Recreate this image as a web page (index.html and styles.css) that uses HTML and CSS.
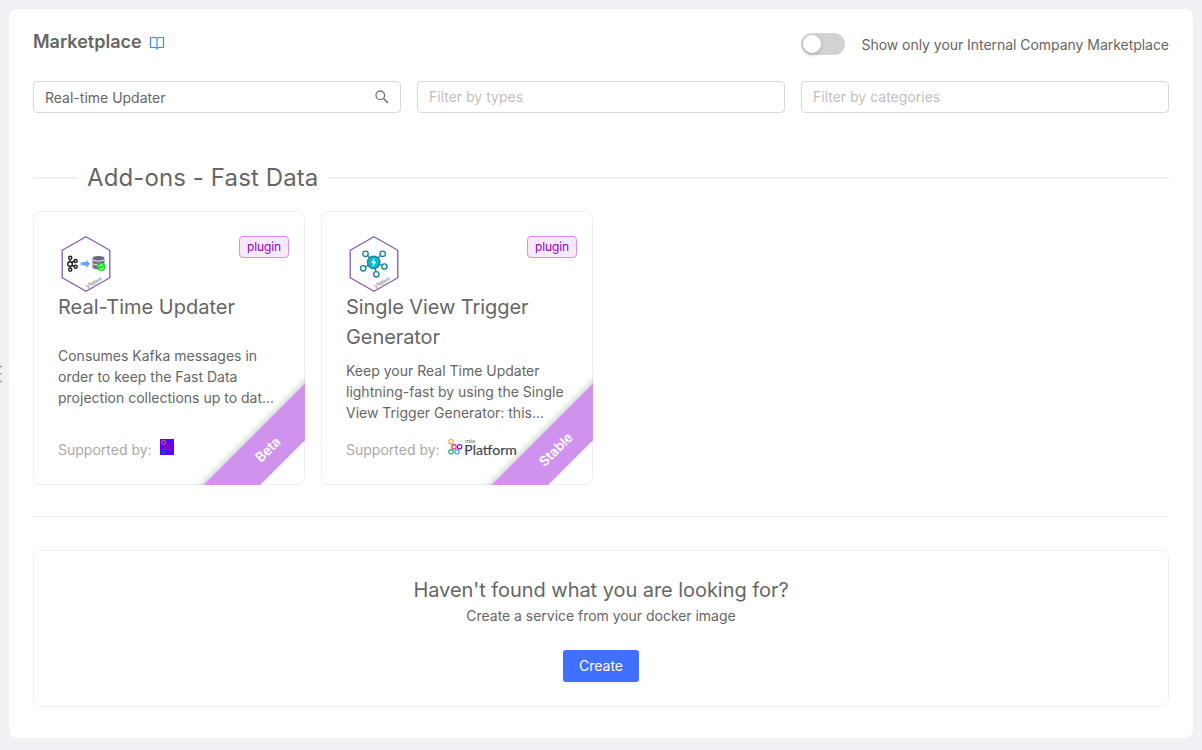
FILE: index.html
```html
<!DOCTYPE html>
<html lang="en">
<head>
<meta charset="utf-8">
<title>Marketplace</title>
<link rel="stylesheet" href="styles.css">
</head>
<body>
<svg class="edge-handle" width="3" height="18" viewBox="0 0 3 18"><path d="M0 1.5h2M0 9h1.5M0 16.500h2" stroke="#999" stroke-width="1.500"/></svg>
<main class="panel">
  <header class="header">
    <h1 class="title">Marketplace
      <svg class="book" width="16" height="14" viewBox="0 0 16 14" fill="none"><path d="M1.500 1.500H6.500Q8 1.500 8 3V13.500M8 3Q8 1.500 9.500 1.500H14.500V11.500H9.500L8 12.500L6.500 11.500H1.500V1.500" stroke="#3f87ff" stroke-width="1.200"/></svg>
    </h1>
    <div class="toggle"><span class="switch"><span class="knob"></span></span><span class="toggle-label">Show only your Internal Company Marketplace</span></div>
  </header>
  <div class="filters">
    <div class="field search"><span>Real-time Updater</span>
      <svg width="14" height="14" viewBox="0 0 14 14" fill="none" stroke="#777" stroke-width="1.300"><circle cx="5.300" cy="5.300" r="4.300"/><path d="M8.500 8.500L13 12.800" stroke-width="1.600"/></svg>
    </div>
    <div class="field placeholder">Filter by types</div>
    <div class="field placeholder">Filter by categories</div>
  </div>
  <h2 class="divider">Add-ons - Fast Data</h2>
  <section class="cards">
    <article class="card">
      <div class="card-top">
        <svg width="56" height="56" viewBox="0 0 56 56" fill="none">
          <path d="M28 .800L51.800 14.300V41.700L28 55.200L4.200 41.700V14.300Z" stroke="#8659a8" stroke-width="1.300"/>
          <g stroke="#222" stroke-width="1.400"><path d="M12 23v9.500M13.500 26.500l3-1.500M13.500 29l3 1.500"/><circle cx="12" cy="28" r="2.300" fill="#fff"/><circle cx="12.200" cy="21.800" r="1.600" fill="#fff"/><circle cx="12.200" cy="33.600" r="1.600" fill="#fff"/><circle cx="17.700" cy="25" r="1.500" fill="#fff"/><circle cx="17.700" cy="30.700" r="1.500" fill="#fff"/></g>
          <path d="M22.500 26h1v3.500h-1zM24.200 26h4v-2.300L32 27.800L28.200 32v-2.500h-4z" fill="#5fa4fb"/>
          <path d="M34.500 22.500v9.500q6 3 12 0v-9.500z" fill="#77758a"/><ellipse cx="40.500" cy="22" rx="6" ry="2" fill="#696680"/><path d="M34.500 24q6 2.500 12 0M34.500 28q6 2.500 12 0" stroke="#e4e4ec"/>
          <circle cx="43.500" cy="31" r="4" fill="#0be51b"/><path d="M41.300 31a2.200 2.200 0 0 1 4-1.200M45.700 31a2.200 2.200 0 0 1-4 1.200" stroke="#fff" stroke-width=".900"/>
          <g transform="translate(31 50) rotate(-29)"><circle cx="-2" cy="-1" r="1" fill="#ff8ca0"/><circle cx="-1" cy="1" r="1" fill="#a2a0ff"/><text class="badge-text" x="0" y="1" textLength="15" lengthAdjust="spacingAndGlyphs">Platform</text></g>
        </svg>
        <span class="tag">plugin</span>
      </div>
      <h3 class="card-title">Real-Time Updater</h3>
      <div class="desc"><p>Consumes Kafka messages in<br>order to keep the Fast Data<br>projection collections up to dat...</p></div>
      <div class="support"><span>Supported by:</span>
        <svg width="14" height="16" viewBox="0 0 14 16" fill="none"><path fill="#5b00ff" d="M0 0h14v16H0z"/><circle cx="3.700" cy="3.300" r="2" stroke="#d6705c"/><path d="M4.500 5.500L6 8M4.500 10.500L6 8.500" stroke="#e3004b"/><circle cx="6.800" cy="8" r="1.600" stroke="#e3004b"/><circle cx="3.700" cy="12.300" r="2" stroke="#077ba0"/><path d="M8.500 10.500l2 1" stroke="#356bff"/></svg>
      </div>
      <div class="ribbon-clip"><span class="ribbon">Beta</span></div>
    </article>
    <article class="card">
      <div class="card-top">
        <svg width="56" height="56" viewBox="0 0 56 56" fill="none">
          <path d="M28 .800L51.800 14.300V41.700L28 55.200L4.200 41.700V14.300Z" stroke="#8659a8" stroke-width="1.300"/>
          <g stroke="#187f9b" stroke-width="1.300"><path d="M28 26L19.500 17.500M28 26L36.500 17.500M28 26L17 32.300M28 26L38.500 30.500M28 26L30.300 38"/><circle cx="19.500" cy="17.800" r="2.700" fill="#fff"/><circle cx="36.700" cy="17.800" r="2.700" fill="#fff"/><circle cx="17.200" cy="32.300" r="2.700" fill="#fff"/><circle cx="38.400" cy="30.500" r="2.700" fill="#fff"/><circle cx="30.300" cy="38.300" r="2.700" fill="#fff"/><circle cx="27.700" cy="26.400" r="6.200" fill="#05bfd3"/></g>
          <path d="M28.500 22L25 27h2.300l-.8 4 3.700-5.300h-2.300z" fill="#fff"/>
          <g transform="translate(31 50) rotate(-29)"><circle cx="-2" cy="-1" r="1" fill="#ffb19a"/><circle cx="-1" cy="1" r="1" fill="#b4a0e8"/><text class="badge-text" x="0" y="1" textLength="15" lengthAdjust="spacingAndGlyphs">Platform</text></g>
        </svg>
        <span class="tag">plugin</span>
      </div>
      <h3 class="card-title long">Single View Trigger Generator</h3>
      <div class="desc"><p>Keep your Real Time Updater<br>lightning-fast by using the Single<br>View Trigger Generator: this...</p></div>
      <div class="support"><span>Supported by:</span>
        <svg class="brand" width="70" height="18" viewBox="0 0 70 18" fill="none"><g stroke-width="1.100"><circle cx="3" cy="2.700" r="2.200" stroke="#ff9d25"/><circle cx="6" cy="7.800" r="2.200" stroke="#f12b4b"/><circle cx="11.700" cy="7.700" r="2.200" stroke="#8000d5"/><circle cx="3" cy="12.800" r="2.200" stroke="#12a66a"/><circle cx="9" cy="12.800" r="2.200" stroke="#3989ff"/></g><text class="mia" x="17" y="4.300" textLength="10" lengthAdjust="spacingAndGlyphs">mia</text><text class="platform" x="16.300" y="16" textLength="52.500" lengthAdjust="spacingAndGlyphs">Platform</text></svg>
      </div>
      <div class="ribbon-clip"><span class="ribbon">Stable</span></div>
    </article>
  </section>
  <hr class="rule">
  <section class="empty">
    <h3 class="empty-title">Haven't found what you are looking for?</h3>
    <p class="empty-text">Create a service from your docker image</p>
    <button class="create">Create</button>
  </section>
</main>
</body>
</html>
```
FILE: styles.css
```css
* { box-sizing: border-box; }
body { margin: 0; height: 750px; padding: 9px 9px 12px; background: #f0f1f5; font: 14px/21px Inter, sans-serif; color: #666; overflow: hidden; }
h1, h2, h3, p { margin: 0; font-weight: 400; }
svg { display: block; flex: none; }
.edge-handle { position: absolute; left: 0; top: 365px; }
.panel { height: 729px; padding: 20px 24px; background: #fff; border-radius: 8px; }
.header { display: flex; justify-content: space-between; height: 52px; }
.title { display: flex; align-items: center; gap: 7px; height: 25px; font-size: 18px; font-weight: 600; }
.book { margin-top: 2px; }
.toggle { display: flex; align-items: center; gap: 17px; height: 31px; }
.toggle-label { letter-spacing: -.04px; }
.switch { width: 44px; height: 22px; margin-top: -1px; padding: 2px; border-radius: 11px; background: #d2d2d2; }
.knob { display: block; width: 18px; height: 18px; border-radius: 50%; background: #fff; box-shadow: 0 2px 4px rgba(0, 35, 11, .2); }
.filters { display: grid; grid-template-columns: repeat(3, 1fr); gap: 16px; }
.field { height: 32px; padding: 0 11px; border: 1px solid #d9d9d9; border-radius: 4px; line-height: 30px; }
.search { display: flex; justify-content: space-between; align-items: center; padding-top: 1px; }
.search svg { margin-top: -2px; }
.placeholder { color: #bfbfbf; }
.divider { display: flex; align-items: center; gap: 10px; margin-top: 47px; font-size: 24px; line-height: 36px; letter-spacing: .11px; white-space: nowrap; }
.divider::before, .divider::after { content: ""; height: 2px; background: #f0f0f0; }
.divider::before { width: 44px; }
.divider::after { flex: 1; }
.cards { display: flex; gap: 16px; margin-top: 15px; }
.card { position: relative; display: flex; flex-direction: column; width: 272px; height: 274px; padding: 24px; border: 1px solid #f0f0f0; border-radius: 8px; }
.card-top { display: flex; justify-content: space-between; align-items: flex-start; margin-right: -9px; }
.tag { width: 50px; height: 22px; border: 1px solid #d98cf5; border-radius: 4px; background: #f9e8ff; color: #8e00c4; font-size: 12px; line-height: 20px; letter-spacing: -.08px; text-align: center; }
.card-title { font-size: 20px; line-height: 30px; }
.long { letter-spacing: -.08px; }
.desc { display: flex; align-items: center; flex: 1; white-space: nowrap; }
.support { display: flex; align-items: flex-start; gap: 8px; height: 29px; padding-top: 8px; color: #aaa; }
.brand { overflow: visible; }
.ribbon-clip { position: absolute; inset: -1px; overflow: hidden; border-radius: 8px 8px 0 8px; pointer-events: none; }
.ribbon { position: absolute; left: 134px; top: 219px; width: 200px; height: 40px; padding-left: 2px; background: #cf93ef; color: #fff; font-size: 13.500px; font-weight: 600; line-height: 40px; letter-spacing: -.1px; text-align: center; transform: rotate(-45deg); box-shadow: 0 0 8px rgba(0, 0, 0, .3); clip-path: inset(-12px 0 0 0); }
.badge-text { font: italic 5px Inter, sans-serif; fill: #555; }
.mia { font: 6px Lato, sans-serif; fill: #555; }
.platform { font: 13.500px Lato, sans-serif; fill: #40484b; stroke: #40484b; stroke-width: .2px; }
.rule { height: 1px; margin: 31px 0 33px; border: 0; background: #f0f0f0; }
.empty { display: flex; flex-direction: column; align-items: center; height: 157px; padding-top: 24px; border: 1px solid #f0f0f0; border-radius: 8px; }
.empty-title { font-size: 20px; line-height: 30px; letter-spacing: -.05px; }
.empty-text { height: 45px; letter-spacing: -.03px; }
.create { width: 76px; height: 32px; padding: 0; border: 0; border-radius: 3px; background: #4070ff; color: #fff; font: 14px/32px Inter, sans-serif; box-shadow: 0 2px 0 rgba(0, 0, 0, .04); }
```
